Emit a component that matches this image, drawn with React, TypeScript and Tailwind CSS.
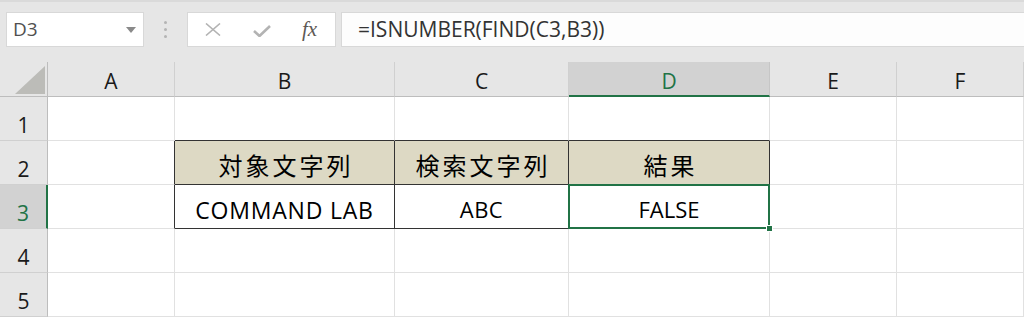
import React from "react";

const FONT = { fontFamily: '"Open Sans", "Noto Sans CJK JP", sans-serif' };
const CJK = { fontFamily: '"Noto Sans CJK JP", "Open Sans", sans-serif' };

const cols = ["A", "B", "C", "D", "E", "F"];

function ColHeader({ label }: { label: string }) {
  const sel = label === "D";
  return (
    <div
      className={
        "h-[35px] flex items-end justify-center text-[21px] leading-[24px] " +
        (sel
          ? "bg-[#d2d2d2] text-[#217346] border-b-2 border-b-[#217346] border-r border-r-[#c6c6c6] pb-[2px]"
          : "bg-[#e6e6e6] text-[#1a1a1a] border-b border-b-[#bdbdbd] border-r border-r-[#d0d0d0] pb-[3px]")
      }
    >
      {label}
    </div>
  );
}

function RowHeader({ n }: { n: number }) {
  const sel = n === 3;
  return (
    <div
      className={
        "h-[44px] flex items-end justify-center text-[21px] leading-[24px] pb-[3px] border-b border-b-[#d0d0d0] " +
        (sel
          ? "bg-[#d2d2d2] text-[#217346] border-r-2 border-r-[#217346]"
          : "bg-[#e6e6e6] text-[#1a1a1a] border-r border-r-[#bdbdbd]")
      }
    >
      {n}
    </div>
  );
}

export default function App() {
  const dark = "border-[#333333]";
  return (
    <div className="w-[1024px] h-[317px] overflow-hidden bg-white" style={FONT}>
      {/* Formula bar area */}
      <div className="h-[62px] bg-[#e6e6e6] border-t-[2px] border-t-[#dadada] flex items-start pt-[10px] pl-[6px]">
        <div className="w-[138px] h-[35px] bg-white border border-[#d8d8d8] flex items-center justify-between pl-[6px] pr-[7px]">
          <span className="text-[19px] text-[#505050] leading-none">D3</span>
          <svg width="10" height="6" viewBox="0 0 10 6">
            <path d="M0 0 L10 0 L5 6 Z" fill="#8a8a8a" />
          </svg>
        </div>
        <div className="w-[43px] h-[35px] flex flex-col items-center justify-center gap-[4px]">
          <span className="w-[3px] h-[3px] rounded-full bg-[#b4b4b4]" />
          <span className="w-[3px] h-[3px] rounded-full bg-[#b4b4b4]" />
          <span className="w-[3px] h-[3px] rounded-full bg-[#b4b4b4]" />
        </div>
        <div className="w-[149px] h-[35px] bg-white border border-[#d8d8d8] flex items-center pl-[17px]">
          <svg width="16" height="13" viewBox="0 0 16 13">
            <path d="M1 0.5 L15 12.5 M15 0.5 L1 12.5" stroke="#b3b3b3" strokeWidth="1.6" />
          </svg>
          <svg width="18" height="12" viewBox="0 0 18 12" className="ml-[32px] mt-[2px]">
            <path d="M1 6 L6.5 11 L17 1" stroke="#b3b3b3" strokeWidth="2.6" fill="none" />
          </svg>
          <span
            className="ml-[31px] text-[21px] italic leading-none text-[#5e5955]"
            style={{ fontFamily: '"Liberation Serif", "DejaVu Serif", serif' }}
          >
            fx
          </span>
        </div>
        <div className="ml-[5px] flex-1 h-[35px] bg-[#fdfdfd] border border-[#d8d8d8] border-r-0 flex items-center pl-[16px]">
          <span className="text-[21px] leading-none text-[#333333]">=ISNUMBER(FIND(C3,B3))</span>
        </div>
      </div>

      {/* Grid */}
      <div className="grid grid-cols-[48px_127px_220px_174px_201px_127px_127px]">
        {/* corner */}
        <div className="h-[35px] bg-[#e6e6e6] border-b border-b-[#bdbdbd] border-r border-r-[#bdbdbd] flex items-end justify-end pr-[2px] pb-[2px]">
          <svg width="30" height="28" viewBox="0 0 30 28">
            <path d="M30 0 L30 28 L0 28 Z" fill="#bcbcb8" />
          </svg>
        </div>
        {cols.map((c) => (
          <ColHeader key={c} label={c} />
        ))}

        {/* Row 1 */}
        <RowHeader n={1} />
        <div className="h-[44px] border-r border-b border-[#e1e1e1]" />
        <div className={"h-[44px] border-r border-r-[#e1e1e1] border-b " + dark} />
        <div className={"h-[44px] border-r border-r-[#e1e1e1] border-b " + dark} />
        <div className={"h-[44px] border-r border-r-[#e1e1e1] border-b " + dark} />
        <div className="h-[44px] border-r border-b border-[#e1e1e1]" />
        <div className="h-[44px] border-r border-b border-[#e1e1e1]" />

        {/* Row 2 */}
        <RowHeader n={2} />
        <div className={"h-[44px] border-b border-b-[#e1e1e1] border-r " + dark} />
        <div
          className={"h-[44px] bg-[#ddd9c4] border-r border-b flex items-end justify-center pb-[7px] pl-[3px] " + dark}
        >
          <span className="text-[24px] leading-[24px] tracking-[3px] text-black" style={CJK}>
            対象文字列
          </span>
        </div>
        <div
          className={"h-[44px] bg-[#ddd9c4] border-r border-b flex items-end justify-center pb-[7px] pl-[3px] " + dark}
        >
          <span className="text-[24px] leading-[24px] tracking-[3px] text-black" style={CJK}>
            検索文字列
          </span>
        </div>
        <div
          className={"h-[44px] bg-[#ddd9c4] border-r border-b flex items-end justify-center pb-[7px] pl-[3px] " + dark}
        >
          <span className="text-[24px] leading-[24px] tracking-[3px] text-black" style={CJK}>
            結果
          </span>
        </div>
        <div className="h-[44px] border-r border-b border-[#e1e1e1]" />
        <div className="h-[44px] border-r border-b border-[#e1e1e1]" />

        {/* Row 3 */}
        <RowHeader n={3} />
        <div className={"h-[44px] border-b border-b-[#e1e1e1] border-r " + dark} />
        <div className={"h-[44px] border-r border-b flex items-end justify-center pb-[6px] " + dark}>
          <span className="text-[23px] leading-[24px] tracking-[0.8px] text-black">COMMAND LAB</span>
        </div>
        <div className={"h-[44px] border-r border-b flex items-end justify-center pb-[7px] " + dark}>
          <span className="text-[22px] leading-[24px] tracking-[0.5px] text-black">ABC</span>
        </div>
        <div className={"relative h-[44px] border-r border-b flex items-end justify-center pb-[7px] " + dark}>
          <span className="text-[22px] leading-[24px] text-black">FALSE</span>
          <div className="absolute -left-[1px] -top-[1px] -right-[1px] -bottom-[1px] border-2 border-[#217346]" />
          <div className="absolute -right-[4px] -bottom-[4px] w-[7px] h-[7px] bg-[#217346] border border-white" />
        </div>
        <div className="h-[44px] border-r border-b border-[#e1e1e1]" />
        <div className="h-[44px] border-r border-b border-[#e1e1e1]" />

        {/* Row 4 */}
        <RowHeader n={4} />
        {cols.map((c) => (
          <div key={"r4" + c} className="h-[44px] border-r border-b border-[#e1e1e1]" />
        ))}

        {/* Row 5 */}
        <RowHeader n={5} />
        {cols.map((c) => (
          <div key={"r5" + c} className="h-[44px] border-r border-b border-[#e1e1e1]" />
        ))}
      </div>
    </div>
  );
}
